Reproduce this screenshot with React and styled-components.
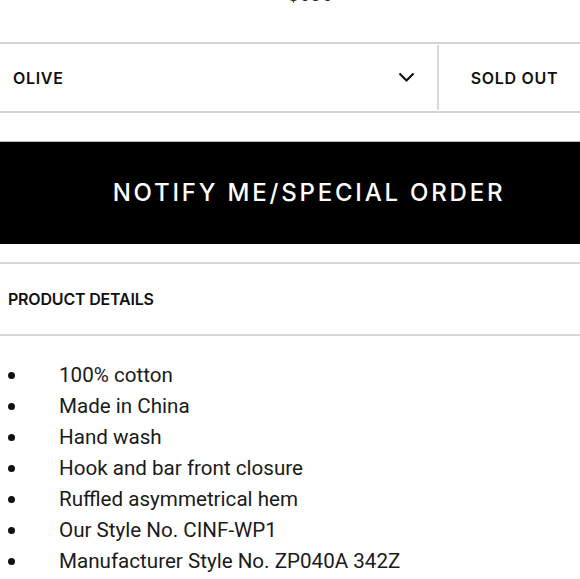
import React from "react";
import styled, { createGlobalStyle } from "styled-components";

const GlobalStyle = createGlobalStyle`
  html, body {
    margin: 0;
    padding: 0;
    background: #fff;
    overflow: hidden;
  }
  body {
    font-family: "Inter", "Liberation Sans", sans-serif;
    color: #111;
  }
`;

const Page = styled.div`
  width: 580px;
  height: 579px;
  overflow: hidden;
`;

const Price = styled.div`
  margin-top: -14px;
  height: 56px;
  text-align: center;
  padding-left: 40px;
  font-size: 18px;
  line-height: 18px;
  font-weight: 500;
  color: #222;
`;

const OptionRow = styled.div`
  display: flex;
  height: 71px;
  border-top: 2px solid #d4d4d4;
  border-bottom: 2px solid #d4d4d4;
  box-sizing: border-box;
`;

const Select = styled.div`
  width: 439px;
  display: flex;
  align-items: center;
  justify-content: space-between;
  padding: 0 22px 0 13px;
  box-sizing: border-box;
  border-right: 2px solid #dadada;
  margin: 1px 0;
  font-size: 16px;
  font-weight: 600;
  letter-spacing: 0.7px;
`;

const SoldOut = styled.div`
  flex: 1;
  display: flex;
  align-items: center;
  justify-content: center;
  padding-left: 10px;
  font-size: 16px;
  font-weight: 600;
  letter-spacing: 0.7px;
`;

const NotifyButton = styled.button`
  display: block;
  width: 100%;
  height: 103px;
  margin-top: 28px;
  border: none;
  border-top: 1px solid #bbb;
  background: #000;
  color: #fff;
  font-family: "Inter", "Liberation Sans", sans-serif;
  font-size: 24px;
  font-weight: 500;
  letter-spacing: 2.8px;
  padding: 0 0 2px 38px;
  cursor: pointer;
`;

const DetailsHeader = styled.div`
  margin-top: 18px;
  height: 74px;
  display: flex;
  align-items: center;
  padding-left: 8px;
  border-top: 2px solid #d8d8d8;
  border-bottom: 2px solid #d8d8d8;
  box-sizing: border-box;
  font-size: 16px;
  font-weight: 600;
  letter-spacing: -0.2px;
`;

const List = styled.ul`
  margin: 23px 0 0;
  padding: 0;
  list-style: none;
`;

const Item = styled.li`
  display: flex;
  align-items: center;
  height: 31px;
  font-family: "Roboto", "Liberation Sans", sans-serif;
  font-size: 20.6px;
  color: #1a1a1a;
  &::before {
    content: "";
    width: 7px;
    height: 7px;
    border-radius: 50%;
    background: #111;
    margin: 2px 44px 0 8px;
    flex-shrink: 0;
  }
`;

const Chevron = () => (
  <svg width="17" height="11" viewBox="0 0 17 11" fill="none">
    <path d="M1.5 1.5 L8.5 8.5 L15.5 1.5" stroke="#111" strokeWidth="2.2" />
  </svg>
);

const details = [
  "100% cotton",
  "Made in China",
  "Hand wash",
  "Hook and bar front closure",
  "Ruffled asymmetrical hem",
  "Our Style No. CINF-WP1",
  "Manufacturer Style No. ZP040A 342Z",
];

export default function App() {
  return (
    <Page>
      <GlobalStyle />
      <Price>$595</Price>
      <OptionRow>
        <Select>
          <span>OLIVE</span>
          <Chevron />
        </Select>
        <SoldOut>SOLD OUT</SoldOut>
      </OptionRow>
      <NotifyButton>NOTIFY ME/SPECIAL ORDER</NotifyButton>
      <DetailsHeader>PRODUCT DETAILS</DetailsHeader>
      <List>
        {details.map((d) => (
          <Item key={d}>{d}</Item>
        ))}
      </List>
    </Page>
  );
}
